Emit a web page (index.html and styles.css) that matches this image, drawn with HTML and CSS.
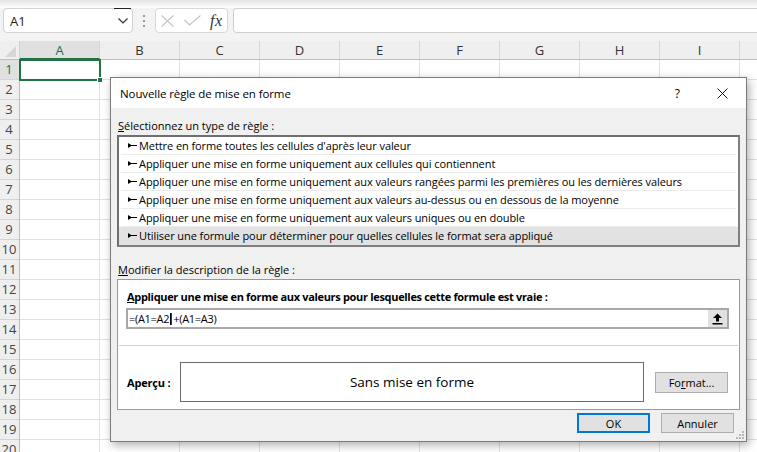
FILE: index.html
```html
<!DOCTYPE html>
<html lang="fr">
<head>
<meta charset="utf-8">
<title>Nouvelle règle de mise en forme</title>
<link rel="stylesheet" href="styles.css">
</head>
<body>
<div class="app">
  <div class="ribbon-shadow"></div>
  <div class="formula-bar">
    <div class="name-box">
      <span class="name-text">A1</span>
      <span class="name-focus"></span>
      <svg class="chevron" width="10" height="6" viewBox="0 0 10 6"><path d="M0.5 0.5 L5 5 L9.5 0.5" fill="none" stroke="#333" stroke-width="1.2"/></svg>
    </div>
    <div class="grip-dots"><i></i><i></i><i></i></div>
    <div class="fx-group">
      <svg width="13" height="12" viewBox="0 0 13 12"><path d="M0.5 0.5 L12.5 11.5 M12.5 0.5 L0.5 11.5" stroke="#c4c4c4" stroke-width="1.1" fill="none"/></svg>
      <svg width="17" height="11" viewBox="0 0 17 11"><path d="M0.5 5 L5.5 10 L16.5 0.5" stroke="#c4c4c4" stroke-width="1.1" fill="none"/></svg>
      <span class="fx">fx</span>
    </div>
    <div class="formula-input"></div>
  </div>
  <div class="header-gap"></div>
  <div class="col-headers">
    <div class="corner"><svg width="19" height="18" viewBox="0 0 19 18"><path d="M16 5 L16 16 L5 16 Z" fill="#d6d6d6"/></svg></div>
    <div class="col-h sel">A</div>
    <div class="col-h">B</div>
    <div class="col-h">C</div>
    <div class="col-h">D</div>
    <div class="col-h">E</div>
    <div class="col-h">F</div>
    <div class="col-h">G</div>
    <div class="col-h">H</div>
    <div class="col-h">I</div>
    <div class="col-h last"></div>
  </div>
  <div class="sheet">
    <div class="row-headers">
      <div class="row-h sel">1</div><div class="row-h">2</div><div class="row-h">3</div><div class="row-h">4</div>
      <div class="row-h">5</div><div class="row-h">6</div><div class="row-h">7</div><div class="row-h">8</div>
      <div class="row-h">9</div><div class="row-h">10</div><div class="row-h">11</div><div class="row-h">12</div>
      <div class="row-h">13</div><div class="row-h">14</div><div class="row-h">15</div><div class="row-h">16</div>
      <div class="row-h">17</div><div class="row-h">18</div><div class="row-h">19</div><div class="row-h">20</div>
    </div>
    <div class="cells">
      <div class="active-cell"><span class="fill-handle"></span></div>
    </div>
  </div>

  <div class="dialog">
    <div class="title-bar">
      <span class="title">Nouvelle règle de mise en forme</span>
      <span class="help">?</span>
      <svg class="close" width="11" height="11" viewBox="0 0 11 11"><path d="M0.5 0.5 L10.5 10.5 M10.5 0.5 L0.5 10.5" stroke="#111" stroke-width="1" fill="none"/></svg>
    </div>
    <div class="dlg-body">
      <div class="label"><u>S</u>électionnez un type de règle :</div>
      <div class="rule-list">
        <div class="rule"><svg class="arr" width="9" height="5" viewBox="0 0 9 5"><path d="M0 0 L0 5 L4 2.5 Z" fill="#000"/><rect x="3" y="2" width="6" height="1" fill="#000"/></svg>Mettre en forme toutes les cellules d'après leur valeur</div>
        <div class="rule"><svg class="arr" width="9" height="5" viewBox="0 0 9 5"><path d="M0 0 L0 5 L4 2.5 Z" fill="#000"/><rect x="3" y="2" width="6" height="1" fill="#000"/></svg>Appliquer une mise en forme uniquement aux cellules qui contiennent</div>
        <div class="rule"><svg class="arr" width="9" height="5" viewBox="0 0 9 5"><path d="M0 0 L0 5 L4 2.5 Z" fill="#000"/><rect x="3" y="2" width="6" height="1" fill="#000"/></svg>Appliquer une mise en forme uniquement aux valeurs rangées parmi les premières ou les dernières valeurs</div>
        <div class="rule"><svg class="arr" width="9" height="5" viewBox="0 0 9 5"><path d="M0 0 L0 5 L4 2.5 Z" fill="#000"/><rect x="3" y="2" width="6" height="1" fill="#000"/></svg>Appliquer une mise en forme uniquement aux valeurs au-dessus ou en dessous de la moyenne</div>
        <div class="rule"><svg class="arr" width="9" height="5" viewBox="0 0 9 5"><path d="M0 0 L0 5 L4 2.5 Z" fill="#000"/><rect x="3" y="2" width="6" height="1" fill="#000"/></svg>Appliquer une mise en forme uniquement aux valeurs uniques ou en double</div>
        <div class="rule selected"><svg class="arr" width="9" height="5" viewBox="0 0 9 5"><path d="M0 0 L0 5 L4 2.5 Z" fill="#000"/><rect x="3" y="2" width="6" height="1" fill="#000"/></svg>Utiliser une formule pour déterminer pour quelles cellules le format sera appliqué</div>
      </div>
      <div class="label label-2"><u>M</u>odifier la description de la règle :</div>
      <div class="desc-box">
        <div class="desc-label"><u>A</u>ppliquer une mise en forme aux valeurs pour lesquelles cette formule est vraie :</div>
        <div class="formula-field">
          <span class="formula-text">=(A1=A2<span class="caret"></span>+(A1=A3)</span>
          <span class="collapse-btn"><svg width="11" height="12" viewBox="0 0 11 12"><path d="M5.5 0.5 L10 5 L7 5 L7 8.5 L4 8.5 L4 5 L1 5 Z" fill="#000"/><rect x="0.5" y="10" width="10" height="1.5" fill="#000"/></svg></span>
        </div>
        <div class="separator"></div>
        <div class="preview-row">
          <span class="preview-label">Aperçu :</span>
          <div class="preview-box">Sans mise en forme</div>
          <span class="btn format-btn">Fo<u>r</u>mat...</span>
        </div>
      </div>
      <div class="buttons">
        <span class="btn ok">OK</span>
        <span class="btn">Annuler</span>
      </div>
    </div>
    <svg class="resize-grip" width="9" height="9" viewBox="0 0 9 9">
      <rect x="6" y="0" width="2" height="2" fill="#b8b8b8"/>
      <rect x="3" y="3" width="2" height="2" fill="#b8b8b8"/><rect x="6" y="3" width="2" height="2" fill="#b8b8b8"/>
      <rect x="0" y="6" width="2" height="2" fill="#b8b8b8"/><rect x="3" y="6" width="2" height="2" fill="#b8b8b8"/><rect x="6" y="6" width="2" height="2" fill="#b8b8b8"/>
    </svg>
  </div>
</div>
</body>
</html>
```
FILE: styles.css
```css
* { box-sizing: border-box; }
html, body { margin: 0; padding: 0; }
body {
  width: 757px;
  height: 452px;
  overflow: hidden;
  background: #fff;
  font-family: "Open Sans", "Noto Sans", "Liberation Sans", sans-serif;
  font-size: 11px;
  color: #000;
}
.app { position: relative; width: 757px; height: 452px; overflow: hidden; background: #f3f3f3; }

.ribbon-shadow {
  height: 9px;
  background: linear-gradient(#e2e2e2, #f6f6f6 70%, #fff);
  border-bottom: 1px solid #e0e0e0;
}
.formula-bar {
  display: flex;
  align-items: center;
  height: 25px;
  margin-top: -1px;
  background: #f3f3f3;
}
.name-box {
  position: relative;
  margin-left: 3px;
  width: 130px;
  height: 25px;
  background: #fff;
  border: 1px solid #d3d3d3;
  border-radius: 4px;
  display: flex;
  align-items: center;
  justify-content: space-between;
  padding: 0 4px 0 6px;
}
.name-text { font-size: 13px; color: #222; }
.name-focus { position: absolute; top: -1px; left: 110px; width: 17px; height: 1px; background: #222; }
.chevron { margin-top: 1px; }
.grip-dots {
  width: 22px;
  display: flex;
  flex-direction: column;
  align-items: center;
  gap: 3px;
}
.grip-dots i { display: block; width: 2px; height: 2px; background: #9a9a9a; }
.fx-group {
  width: 73px;
  height: 25px;
  background: #fff;
  border: 1px solid #d8d8d8;
  border-radius: 4px;
  display: flex;
  align-items: center;
  gap: 10px;
  padding-left: 5px;
}
.fx {
  font-family: "Liberation Serif", "DejaVu Serif", serif;
  font-style: italic;
  font-size: 16px;
  color: #333;
  margin-left: -1px;
  letter-spacing: 0.5px;
}
.formula-input {
  flex: 1;
  margin-left: 5px;
  height: 25px;
  background: #fff;
  border: 1px solid #d0d0d0;
  border-right: none;
  border-radius: 4px 0 0 4px;
}
.header-gap { height: 8px; background: #f3f3f3; }

.col-headers {
  display: flex;
  height: 19px;
  background: #efefef;
  border-bottom: 1px solid #bdbdbd;
}
.corner { width: 20px; height: 18px; border-right: 1px solid #d0d0d0; }
.corner svg { display: block; }
.col-h {
  width: 80px;
  flex: none;
  text-align: center;
  line-height: 18px;
  font-size: 13px;
  color: #333;
  border-right: 1px solid #d6d6d6;
}
.col-h.sel { background: #e0e0e0; color: #217346; border-bottom: 1px solid #217346; }
.col-h.last { flex: 1; border-right: none; }

.sheet { display: flex; }
.row-headers { width: 20px; background: #efefef; border-right: 1px solid #bdbdbd; flex: none; }
.row-h {
  height: 20px;
  line-height: 19px;
  font-size: 13px;
  color: #444;
  text-align: center;
  border-bottom: 1px solid #d4d4d4;
  padding-right: 1px;
}
.row-h.sel { background: #e0e0e0; color: #217346; }
.cells {
  position: relative;
  flex: 1;
  height: 400px;
  background-color: #fff;
  background-image:
    repeating-linear-gradient(to right, transparent 0 79px, #e1e1e1 79px 80px),
    repeating-linear-gradient(to bottom, transparent 0 19px, #e1e1e1 19px 20px);
}
.active-cell {
  position: absolute;
  left: -1px;
  top: -1px;
  width: 82px;
  height: 22px;
  border: 2px solid #217346;
}
.fill-handle {
  position: absolute;
  right: -4px;
  bottom: -4px;
  width: 6px;
  height: 6px;
  background: #217346;
  border: 1px solid #fff;
}

/* Dialog */
.dialog {
  position: absolute;
  left: 110px;
  top: 77px;
  width: 637px;
  height: 365px;
  border: 1px solid #7a7a7a;
  background: #f0f0f0;
  box-shadow: 2px 3px 9px rgba(0, 0, 0, 0.32);
  display: flex;
  flex-direction: column;
}
.title-bar {
  height: 30px;
  background: #fff;
  display: flex;
  align-items: center;
  padding-left: 9px;
  flex: none;
}
.title { font-size: 11.5px; flex: 1; letter-spacing: -0.1px; }
.help { font-size: 12px; margin-right: 37px; }
.close { margin-right: 18px; }

.dlg-body {
  flex: 1;
  padding: 10px 6px 0;
  display: flex;
  flex-direction: column;
}
.label { height: 16px; line-height: 16px; padding-left: 1px; }
.label-2 { margin-top: 15px; }
.rule-list {
  margin-top: 1px;
  height: 112px;
  background: #fff;
  border: 2px solid #7f7f7f;
  border-top-color: #6f6f6f;
  border-left-color: #6f6f6f;
}
.rule {
  height: 18px;
  line-height: 17px;
  border-bottom: 1px solid #ececec;
  margin: 0 2px 0 2px;
  padding-left: 7px;
  white-space: nowrap;
  display: flex;
  align-items: center;
  letter-spacing: -0.08px;
}
.rule.selected { background: #e2e2e2; border-bottom-color: #e2e2e2; margin: 0; padding-left: 9px; }
.arr { flex: none; margin-right: 2px; }

.desc-box {
  margin-top: 1px;
  height: 131px;
  background: #fff;
  border: 1px solid #9a9a9a;
  padding: 9px 10px 0 8px;
}
.desc-label {
  height: 16px;
  line-height: 16px;
  font-weight: bold;
  padding-left: 1px;
  letter-spacing: -0.32px;
}
.formula-field {
  margin-top: 3px;
  height: 21px;
  border: 2px solid #a8a8a8;
  display: flex;
  align-items: center;
  justify-content: space-between;
  padding-left: 1px;
}
.formula-text { font-size: 11px; letter-spacing: -0.3px; display: flex; align-items: center; }
.caret { display: inline-block; width: 2px; height: 12px; background: #1a3e8c; border-left: 1px solid #000; margin: 0 1px; }
.collapse-btn {
  width: 19px;
  height: 17px;
  background: #e1e1e1;
  display: flex;
  align-items: center;
  justify-content: center;
  margin-right: 0;
}
.separator { height: 1px; background: #cfcfcf; margin: 16px -9px 0 -7px; }
.preview-row {
  margin-top: 16px;
  display: flex;
  align-items: center;
}
.preview-label { font-weight: bold; width: 54px; padding-left: 1px; letter-spacing: -0.2px; }
.preview-box {
  width: 464px;
  height: 40px;
  border: 1px solid #6a6a6a;
  display: flex;
  align-items: center;
  justify-content: center;
  font-size: 13.5px;
}
.btn {
  height: 20px;
  width: 73px;
  background: #e1e1e1;
  border: 1px solid #adadad;
  display: flex;
  align-items: center;
  justify-content: center;
  font-size: 11px;
}
.format-btn { margin-left: 11px; height: 21px; }
.buttons {
  margin-top: 3px;
  display: flex;
  justify-content: flex-end;
  gap: 11px;
  padding-right: 6px;
}
.btn.ok { border: 2px solid #0078d7; }
.resize-grip { position: absolute; right: 1px; bottom: 1px; }
```
